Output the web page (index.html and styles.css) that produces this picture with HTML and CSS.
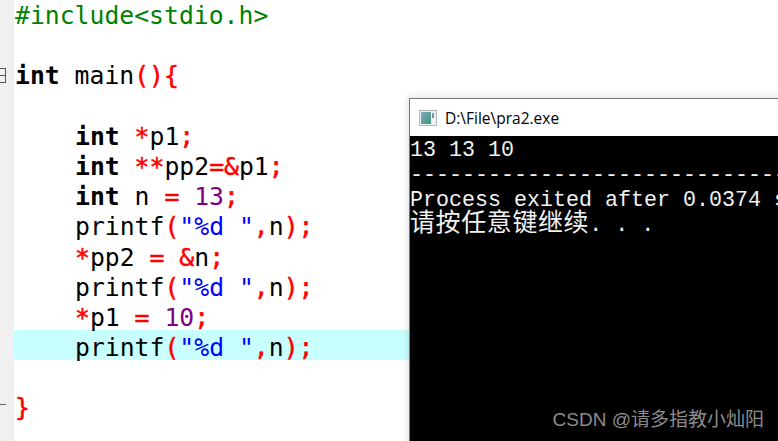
FILE: index.html
```html
<!DOCTYPE html>
<html lang="zh-CN">
<head>
<meta charset="utf-8">
<title>pra2</title>
<link rel="stylesheet" href="styles.css">
</head>
<body>
<div class="editor">
  <div class="gutter">
    <span class="fold fold-open"></span>
    <span class="fold fold-end"></span>
  </div>
  <div class="code">
    <div class="line pp">#include&lt;stdio.h&gt;</div>
    <div class="line"></div>
    <div class="line"><b>int</b> main<i>(){</i></div>
    <div class="line"></div>
    <div class="line ind"><b>int</b> <i>*</i>p1<i>;</i></div>
    <div class="line ind"><b>int</b> <i>**</i>pp2<i>=&amp;</i>p1<i>;</i></div>
    <div class="line ind"><b>int</b> n <i>=</i> <em>13</em><i>;</i></div>
    <div class="line ind">printf<i>(</i><u>"%<s>d</s> "</u><i>,</i>n<i>);</i></div>
    <div class="line ind"><i>*</i>pp2 <i>=</i> <i>&amp;</i>n<i>;</i></div>
    <div class="line ind">printf<i>(</i><u>"%<s>d</s> "</u><i>,</i>n<i>);</i></div>
    <div class="line ind"><i>*</i>p1 <i>=</i> <em>10</em><i>;</i></div>
    <div class="line ind active">printf<i>(</i><u>"%<s>d</s> "</u><i>,</i>n<i>);</i></div>
    <div class="line"></div>
    <div class="line"><i>}</i></div>
  </div>
</div>
<div class="window">
  <div class="titlebar">
    <svg class="appicon" width="18" height="16" viewBox="0 0 18 16" aria-hidden="true">
      <defs>
        <linearGradient id="g" x1="0" y1="0" x2="1" y2="1">
          <stop offset="0" stop-color="#7fa8c4"/>
          <stop offset="1" stop-color="#3f9a78"/>
        </linearGradient>
      </defs>
      <rect x="0.5" y="0.5" width="17" height="15" fill="#eef1f3" stroke="#b4b8bc"/>
      <rect x="2" y="2" width="10" height="12" fill="url(#g)"/>
      <rect x="13" y="3" width="2" height="5" fill="#6b9c9a"/>
    </svg>
    <span class="title">D:\File\pra2.exe</span>
  </div>
  <div class="console">
    <div class="con-line">13 13 10</div>
    <div class="con-line">------------------------------------</div>
    <div class="con-line">Process exited after 0.0374 seconds</div>
    <div class="con-line"><span class="cjk">请按任意键继续</span>. . .</div>
  </div>
</div>
<div class="watermark">CSDN @请多指教小灿阳</div>
</body>
</html>
```
FILE: styles.css
```css
html, body {
  margin: 0;
  height: 100%;
}
body {
  width: 778px;
  height: 441px;
  overflow: hidden;
  position: relative;
  background: #fff;
}
.editor {
  display: flex;
  height: 441px;
}
.gutter {
  width: 14px;
  flex: none;
  background: #f0f0f0;
  position: relative;
}
.fold {
  position: absolute;
  left: -5px;
  box-sizing: border-box;
}
.fold-open {
  top: 68px;
  width: 11px;
  height: 15px;
  border: 1px solid #555;
  background: linear-gradient(#555, #555) center / 100% 1px no-repeat;
}
.fold-end {
  top: 404px;
  left: 0;
  width: 6px;
  height: 1px;
  background: #666;
}
.code {
  flex: 1;
  margin-top: -2px;
  font: 24.75px/25.2px "DejaVu Sans Mono", monospace;
  color: #000;
}
.line {
  box-sizing: border-box;
  height: 30.2px;
  padding: 5px 0 0 1px;
  white-space: pre;
}
.ind {
  padding-left: 61px;
}
.active {
  background: #c8ffff;
}
.pp {
  color: #008000;
}
.code b {
  font-weight: 700;
}
.code i {
  font-style: normal;
  color: #ff0000;
  -webkit-text-stroke: 0.5px #ff0000;
}
.code em {
  font-style: normal;
  color: #800080;
}
.code u {
  text-decoration: none;
  color: #0000ff;
}
.code s {
  text-decoration: none;
}
.window {
  position: absolute;
  left: 409px;
  top: 98px;
  width: 380px;
  height: 360px;
  box-sizing: border-box;
  border: 1px solid #7a7a7a;
  background: #fff;
  box-shadow: 0 0 8px rgba(0, 0, 0, 0.18);
  display: flex;
  flex-direction: column;
}
.titlebar {
  height: 37px;
  flex: none;
  display: flex;
  align-items: center;
  gap: 8px;
  padding-left: 9px;
  font: 15.5px "Open Sans", "Liberation Sans", sans-serif;
  color: #000;
}
.console {
  flex: 1;
  padding-top: 2px;
  background: #000;
  color: #f2f2f2;
  font: 21.67px/25px "Liberation Mono", "Noto Sans CJK SC", monospace;
  white-space: nowrap;
  overflow: hidden;
}
.con-line {
  height: 25px;
}
.cjk {
  font-family: "Noto Sans CJK SC", sans-serif;
  font-size: 25px;
  letter-spacing: 0.6px;
  line-height: 0;
}
.watermark {
  position: absolute;
  right: 14px;
  top: 408px;
  font: 19px/24px "Liberation Sans", "Noto Sans CJK SC", sans-serif;
  color: #8c8c8c;
  white-space: nowrap;
}
```
